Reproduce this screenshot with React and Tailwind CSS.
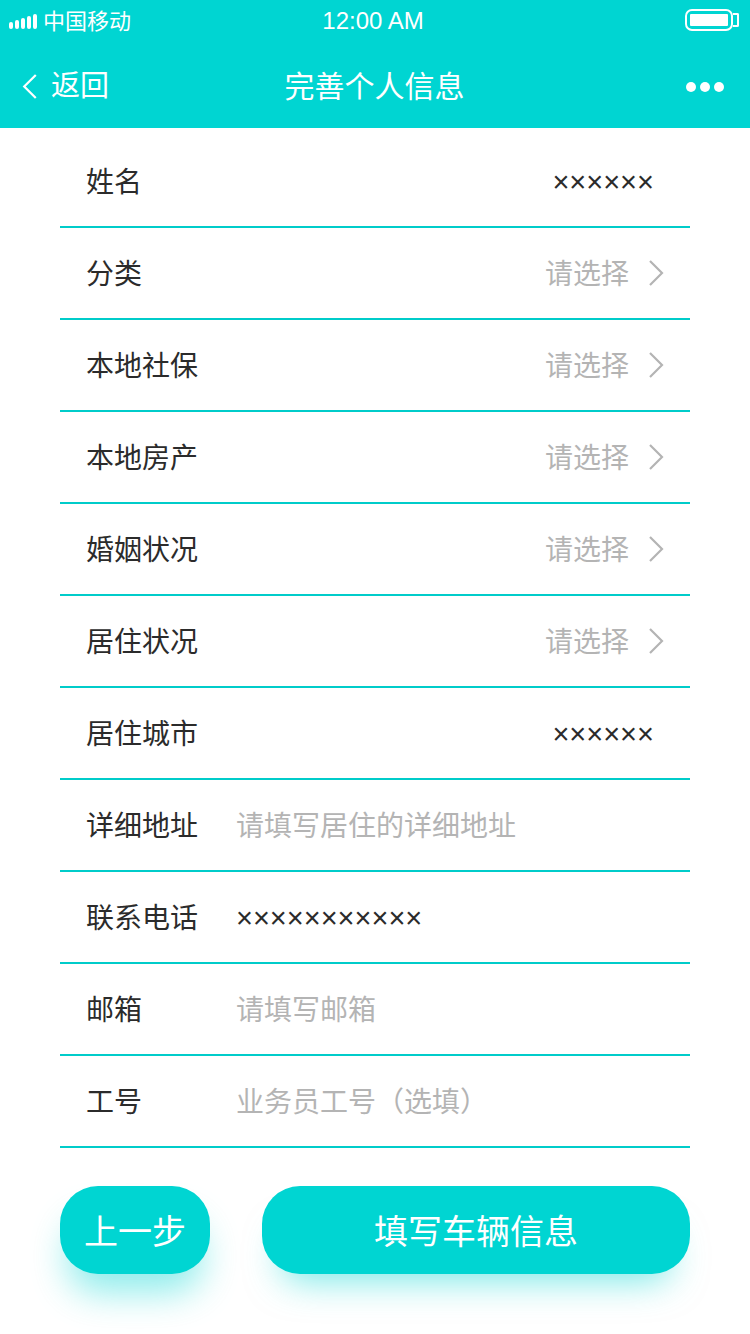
const FONT = "font-['Noto_Sans_CJK_SC',sans-serif]";

const rows = [
  { label: '姓名', value: '××××××', type: 'value' },
  { label: '分类', type: 'select' },
  { label: '本地社保', type: 'select' },
  { label: '本地房产', type: 'select' },
  { label: '婚姻状况', type: 'select' },
  { label: '居住状况', type: 'select' },
  { label: '居住城市', value: '××××××', type: 'value' },
  { label: '详细地址', placeholder: '请填写居住的详细地址', type: 'input' },
  { label: '联系电话', text: '×××××××××××', type: 'input' },
  { label: '邮箱', placeholder: '请填写邮箱', type: 'input' },
  { label: '工号', placeholder: '业务员工号（选填）', type: 'input' },
];

const Chevron = ({ className, color, width = 2.2 }) => (
  <svg className={className} viewBox="0 0 16 28" fill="none" stroke={color} strokeWidth={width}>
    <path d="M2 2l12 12L2 26" />
  </svg>
);

const Row = ({ row }) => (
  <div className="flex h-[92px] items-center border-b-2 border-[#00ccca] pb-[2px] pl-[26px] pr-[26px]">
    <span className="w-[150px] shrink-0 text-[28px] text-[#2b2b2b]">{row.label}</span>
    {row.placeholder && <span className="text-[28px] text-[#b4b4b4]">{row.placeholder}</span>}
    {row.text && (
      <span className="mt-[6px] font-['Liberation_Sans',sans-serif] text-[29px] text-[#2b2b2b]">{row.text}</span>
    )}
    {row.type === 'value' && (
      <span className="mt-[6px] ml-auto pr-[10px] font-['Liberation_Sans',sans-serif] text-[29px] text-[#2b2b2b]">
        {row.value}
      </span>
    )}
    {row.type === 'select' && (
      <div className="ml-auto flex items-center gap-[19px]">
        <span className="text-[28px] text-[#b4b4b4]">请选择</span>
        <Chevron className="mt-[2px] h-[28px] w-[16px]" color="#b4b4b4" />
      </div>
    )}
  </div>
);

export default function App() {
  return (
    <div className={`relative h-[1334px] w-[750px] overflow-hidden bg-white ${FONT}`}>
      {/* Header */}
      <div className="h-[128px] bg-[#00d5d2] text-white">
        <div className="flex h-[42px] items-center justify-between pb-[2px] pl-[9px] pr-[11px]">
          <div className="flex w-[200px] items-center gap-[6px]">
            <div className="mt-[2px] flex items-end gap-[2px]">
              <span className="h-[7px] w-[4px] rounded-full bg-white" />
              <span className="h-[9px] w-[4px] rounded-full bg-white" />
              <span className="h-[11px] w-[4px] rounded-full bg-white" />
              <span className="h-[13px] w-[4px] rounded-full bg-white" />
              <span className="h-[15px] w-[4px] rounded-full bg-white" />
            </div>
            <span className="pb-[2px] text-[22px] leading-none">中国移动</span>
          </div>
          <span className="mt-[2px] mr-[2px] font-['Liberation_Sans',sans-serif] text-[24px] leading-none">12:00 AM</span>
          <div className="flex w-[200px] items-center justify-end">
            <div className="flex h-[22px] w-[48px] items-center rounded-[7px] border-2 border-white p-[3px]">
              <div className="h-full w-full rounded-[1px] bg-white" />
            </div>
            <div className="h-[14px] w-[6px] rounded-r-[2px] border-2 border-l-0 border-white" />
          </div>
        </div>
        <div className="flex h-[86px] items-center justify-between pl-[22px] pr-[26px]">
          <div className="flex w-[203px] items-center gap-[13px]">
            <Chevron className="mt-[2px] h-[27px] w-[16px] -scale-x-100" color="#ffffff" width={2.3} />
            <span className="pb-[2px] text-[29px]">返回</span>
          </div>
          <span className="pb-[2px] text-[30px]">完善个人信息</span>
          <div className="mt-[4px] flex w-[200px] justify-end gap-[4px]">
            <span className="h-[10px] w-[10px] rounded-full bg-white" />
            <span className="h-[10px] w-[10px] rounded-full bg-white" />
            <span className="h-[10px] w-[10px] rounded-full bg-white" />
          </div>
        </div>
      </div>

      {/* Form rows */}
      <div className="mx-[60px] mt-[8px]">
        {rows.map((row) => (
          <Row key={row.label} row={row} />
        ))}
      </div>

      {/* Buttons */}
      <div className="mx-[60px] mt-[38px] flex justify-between">
        <button className="h-[88px] w-[150px] rounded-[38px] bg-[#00d5d2] pb-[2px] text-[34px] text-white shadow-[0_26px_36px_-8px_rgba(0,213,210,0.45)]">
          上一步
        </button>
        <button className="h-[88px] w-[428px] rounded-[38px] bg-[#00d5d2] pb-[2px] text-[34px] text-white shadow-[0_26px_36px_-20px_rgba(0,213,210,0.55)]">
          填写车辆信息
        </button>
      </div>
    </div>
  );
}
